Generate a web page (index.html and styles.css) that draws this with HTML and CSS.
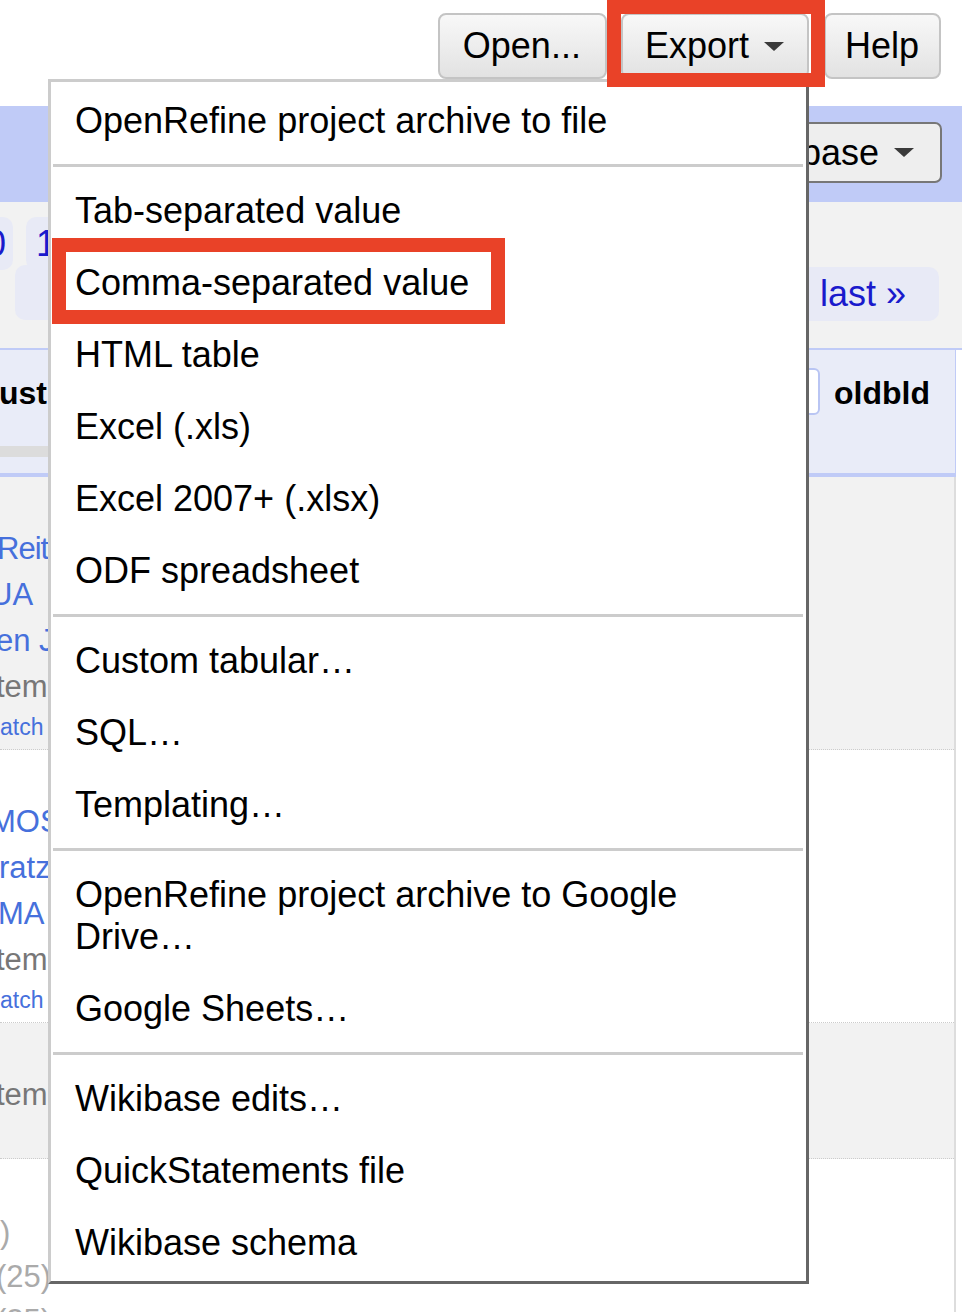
FILE: index.html
```html
<!DOCTYPE html>
<html lang="en">
<head>
<meta charset="utf-8">
<title>OpenRefine export menu</title>
<link rel="stylesheet" href="styles.css">
</head>
<body>
<div class="page">
  <header class="topbar">
    <div class="btn btn-open">Open...</div>
    <div class="export-wrap">
      <div class="btn btn-export">Export<span class="caret"></span></div>
      <span class="hl hl-export"></span>
    </div>
    <div class="btn btn-help">Help</div>
  </header>

  <div class="bluebar">
    <div class="wb-btn">Wikibase<span class="caret"></span></div>
  </div>

  <div class="pager">
    <div class="pager-left">
      <div class="pages">
        <span class="pg pg0">0</span>
        <span class="pg pg1">1</span>
      </div>
      <div class="pg pg-prev"></div>
    </div>
    <div class="pg pg-last">last »</div>
  </div>

  <div class="thead-wrap">
    <div class="thead">
      <div class="th-left">
        <div class="th-label c1">ust</div>
        <div class="th-band"></div>
      </div>
      <div class="th-right">
        <span class="th-drop"></span>
        <span class="th-label">oldbld</span>
      </div>
    </div>
  </div>

  <div class="rows">
    <div class="row odd r-tall">
      <div class="ln blue narrow c3">Reiter</div>
      <div class="ln blue c10">UA</div>
      <div class="ln blue c4">en J</div>
      <div class="ln gray c4">tem</div>
      <div class="ln blue small">atch</div>
    </div>
    <div class="row r-tall">
      <div class="ln blue c10">MOS</div>
      <div class="ln blue c1">ratz</div>
      <div class="ln blue c2">MA</div>
      <div class="ln gray c4">tem</div>
      <div class="ln blue small">atch</div>
    </div>
    <div class="row odd r-short">
      <div class="ln gray c4">tem</div>
    </div>
    <div class="row r-foot">
      <div class="ln light">)</div>
      <div class="ln light c4">(25)</div>
      <div class="ln light c4">(25)</div>
    </div>
  </div>

  <div class="menu">
    <div class="mi">OpenRefine project archive to file</div>
    <div class="sep"></div>
    <div class="mi">Tab-separated value</div>
    <div class="mi mi-hl">Comma-separated value<span class="hl hl-csv"></span></div>
    <div class="mi">HTML table</div>
    <div class="mi">Excel (.xls)</div>
    <div class="mi">Excel 2007+ (.xlsx)</div>
    <div class="mi">ODF spreadsheet</div>
    <div class="sep"></div>
    <div class="mi">Custom tabular…</div>
    <div class="mi">SQL…</div>
    <div class="mi">Templating…</div>
    <div class="sep"></div>
    <div class="mi">OpenRefine project archive to Google<br>Drive…</div>
    <div class="mi">Google Sheets…</div>
    <div class="sep"></div>
    <div class="mi">Wikibase edits…</div>
    <div class="mi">QuickStatements file</div>
    <div class="mi">Wikibase schema</div>
  </div>
</div>
</body>
</html>
```

FILE: styles.css
```css
* { box-sizing: border-box; }

html, body {
  margin: 0;
  padding: 0;
}

body {
  width: 962px;
  height: 1312px;
  overflow: hidden;
  background: #fff;
  color: #000;
  font-family: "Liberation Sans", Arial, Helvetica, sans-serif;
}

.page {
  position: relative;
  width: 962px;
  height: 1312px;
  overflow: hidden;
}

/* ---------- top buttons ---------- */
.topbar {
  height: 106px;
  display: flex;
  justify-content: flex-end;
  align-items: flex-start;
  padding: 13px 21px 0 0;
}

.btn {
  height: 66px;
  display: flex;
  align-items: center;
  border: 2px solid #c4c4c4;
  border-radius: 8px;
  background: linear-gradient(#f8f8f8, #e2e2e2);
  font-size: 36px;
  line-height: 42px;
  color: #000;
  white-space: nowrap;
}

.btn-open { padding: 0 24px 0 23px; }
.btn-export { padding: 0 23px 0 22px; }
.btn-help { padding: 0 20px 0 19px; }

.export-wrap {
  position: relative;
  margin-left: 14px;
  margin-right: 15px;
}

.caret {
  display: inline-block;
  width: 0;
  height: 0;
  margin-left: 15px;
  border-left: 10px solid transparent;
  border-right: 10px solid transparent;
  border-top: 9px solid #3a3a3a;
}

.hl {
  position: absolute;
  border: 14px solid #e94228;
  z-index: 10;
}

.hl-export {
  top: -13px;
  left: -14px;
  width: 218px;
  height: 87px;
}

/* ---------- blue bar ---------- */
.bluebar {
  height: 96px;
  background: #c0cbf7;
  display: flex;
  justify-content: flex-end;
  align-items: flex-start;
  padding: 16px 20px 0 0;
}

.wb-btn {
  height: 61px;
  display: flex;
  align-items: center;
  padding: 0 26px 0 20px;
  border: 2px solid #777;
  border-radius: 7px;
  background: #eeeeee;
  font-size: 36px;
  white-space: nowrap;
}

/* ---------- pager ---------- */
.pager {
  height: 146px;
  background: #f2f2f2;
  display: flex;
  justify-content: space-between;
  align-items: flex-start;
}

.pager-left { padding-top: 15px; }

.pages {
  display: flex;
  gap: 13px;
}

.pg {
  display: block;
  height: 53px;
  background: #e8eaf6;
  border-radius: 10px;
  color: #1a1acc;
  font-size: 36px;
  line-height: 53px;
  white-space: nowrap;
}

.pg0 {
  width: 40px;
  margin-left: -27px;
  padding-right: 7px;
  text-align: right;
}

.pg1 {
  width: 60px;
  padding-left: 10px;
}

.pg-prev {
  width: 100px;
  height: 55px;
  margin-left: 15px;
  margin-top: -5px;
}

.pg-last {
  width: 140px;
  height: 54px;
  margin-top: 65px;
  margin-right: 23px;
  padding-right: 33px;
  text-align: right;
  line-height: 54px;
}

/* ---------- table header ---------- */
.thead-wrap {
  border-top: 2px solid #c0cbf7;
}

.thead {
  width: 956px;
  height: 127px;
  background: #e9ecf8;
  border-bottom: 4px solid #c0cbf7;
  border-right: 1px solid #c0cbf7;
  display: flex;
  justify-content: space-between;
  align-items: flex-start;
}

.th-left {
  width: 300px;
  padding-top: 20px;
}

.th-label {
  font-size: 32px;
  font-weight: bold;
  line-height: 47px;
  white-space: nowrap;
}

.th-right .th-label { padding-top: 2px; }

.th-band {
  height: 11px;
  margin-top: 29px;
  background: #dcdcdc;
}

.th-right {
  display: flex;
  align-items: flex-start;
  gap: 14px;
  padding: 18px 25px 0 0;
}

.th-drop {
  display: block;
  width: 30px;
  height: 47px;
  background: #fff;
  border: 2px solid #b9c5f3;
  border-radius: 6px;
}

/* ---------- rows ---------- */
.rows {
  width: 956px;
  border-right: 2px solid #dddddd;
}

.row {
  padding-top: 49px;
  border-bottom: 1px dotted #cccccc;
  font-size: 31px;
  line-height: 46px;
  white-space: nowrap;
  overflow: hidden;
  background: #fff;
}

.row.odd { background: #f2f2f2; }

.r-tall { height: 273px; }
.r-short { height: 136px; }
.r-foot {
  height: 200px;
  padding-top: 52px;
  line-height: 44px;
  border-bottom: none;
}

.ln.blue { color: #4670dc; }
.ln.gray { color: #777; }
.ln.light { color: #aaa; }
.ln.narrow { letter-spacing: -1px; }
.ln.small {
  font-size: 23px;
  line-height: 34px;
}

.c1 { margin-left: -1px; }
.c2 { margin-left: -2px; }
.c3 { margin-left: -3px; }
.c4 { margin-left: -4px; }
.c10 { margin-left: -10px; }

/* ---------- dropdown menu ---------- */
.menu {
  position: absolute;
  left: 48px;
  top: 79px;
  width: 761px;
  z-index: 5;
  background: #fff;
  border: 3px solid;
  border-color: #cccccc #666666 #666666 #cccccc;
  padding: 3px 0 2px;
}

.mi {
  position: relative;
  padding: 15px 24px;
  font-size: 36px;
  line-height: 42px;
  color: #000;
}

.sep {
  height: 3px;
  margin: 7px 3px 8px 2px;
  background: #cccccc;
}

.hl-csv {
  left: 1px;
  top: -9px;
  width: 453px;
  height: 86px;
}
```
